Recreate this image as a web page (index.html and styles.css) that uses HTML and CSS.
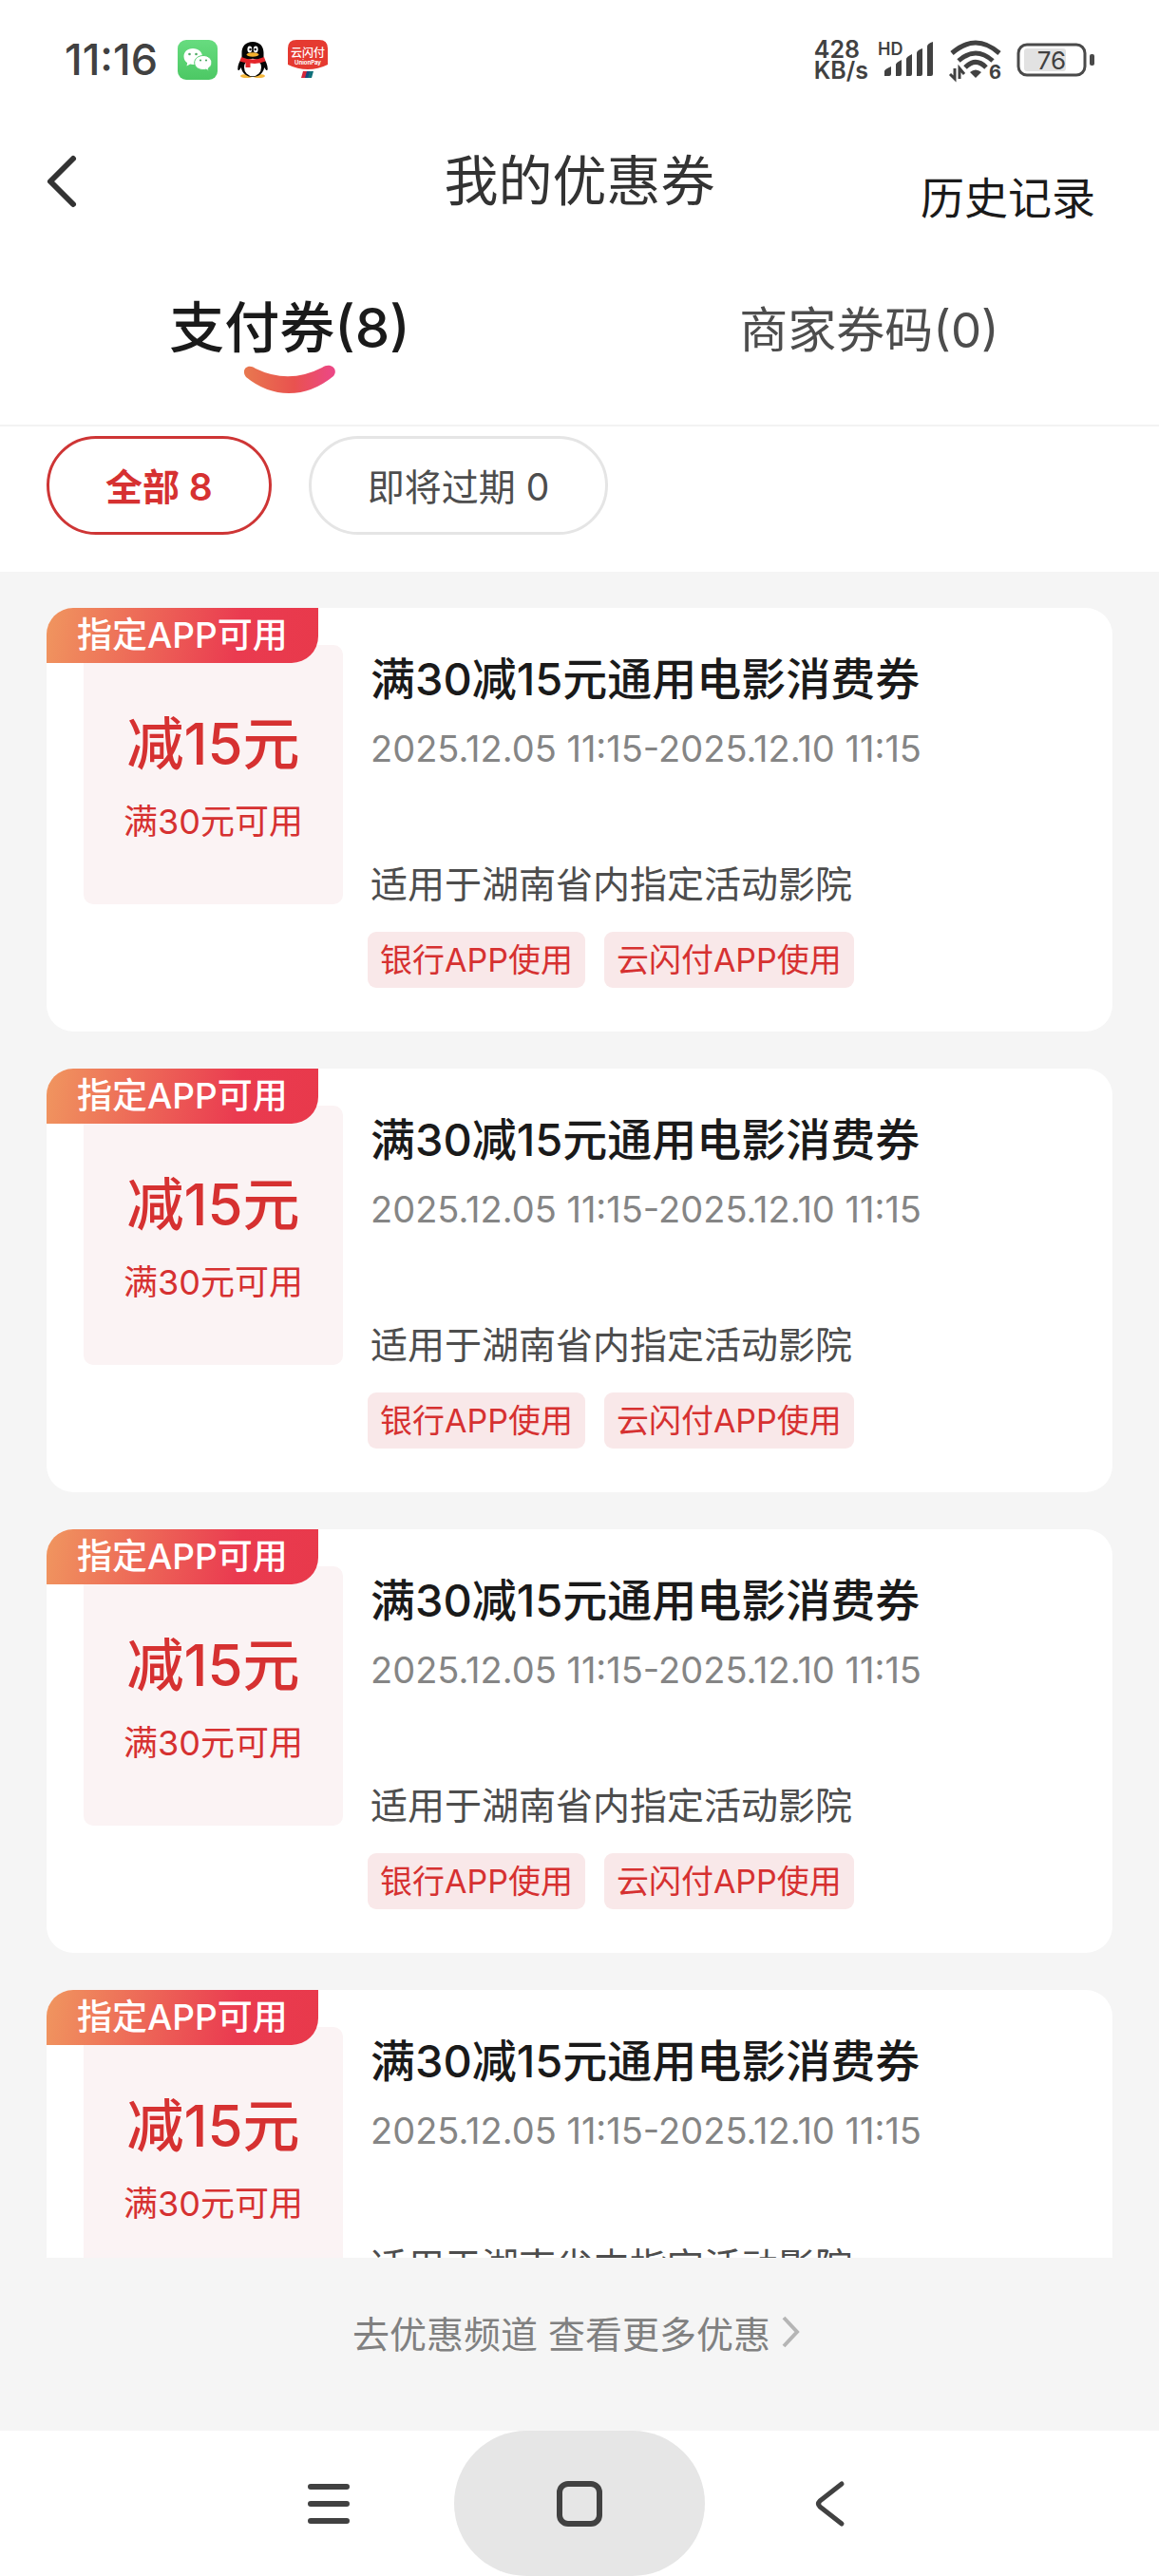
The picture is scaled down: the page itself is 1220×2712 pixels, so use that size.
FILE: index.html
```
<!DOCTYPE html>
<html lang="zh-CN">
<head>
  <meta charset="UTF-8" />
  <meta name="viewport" content="width=device-width, initial-scale=1.0"/>
  <title>我的优惠券</title>
  <link rel="stylesheet" href="styles.css">
</head>
<body>

  <div class="status-bar">
    <div class="status-left">
      <span class="time">11:16</span>
      <svg class="app-icon" width="42" height="42" viewBox="0 0 42 42">
        <defs>
          <linearGradient id="wechatBg" x1="0" y1="0" x2="0" y2="1">
            <stop offset="0" stop-color="#67dc7f"/>
            <stop offset="1" stop-color="#4cc864"/>
          </linearGradient>
        </defs>
        <rect width="42" height="42" rx="9" fill="url(#wechatBg)"/>
        <path d="M16 9C10 9 6.500 13 6.500 17.500c0 3 1.500 5.200 3.700 6.700L9.500 27.500l3.700-1.900c1 .3 2 .4 3.200.4C22 26 26 22 26 17.500S22 9 16 9z" fill="#fff"/>
        <path d="M27 16.500c-5.300 0-9.300 3.300-9.300 7.500s4 7.500 9.300 7.500c1.100 0 2-.1 2.900-.4l3 1.600-.7-2.700c2.200-1.400 3.700-3.500 3.700-6 0-4.200-3.800-7.500-8.900-7.500z" fill="#fff" stroke="#58d071"/>
        <circle cx="12.500" cy="15" r="1.300" fill="#4ea963"/>
        <circle cx="19.500" cy="15" r="1.300" fill="#4ea963"/>
        <circle cx="24" cy="21.500" r="1.100" fill="#4ea963"/>
        <circle cx="30" cy="21.500" r="1.100" fill="#4ea963"/>
      </svg>
      <svg class="app-icon" width="32" height="38" viewBox="0 0 32 38">
        <ellipse cx="9.500" cy="36" rx="6.500" ry="2" fill="#f5b83d"/>
        <ellipse cx="22.500" cy="36" rx="6.500" ry="2" fill="#f5b83d"/>
        <path d="M16 0C8.500 0 4.500 5 4.500 11.500V17C2 21 0 25 .3 29c.3 2 1.800 1.200 3.500-2 1 6 5.700 10 12.200 10s11.200-4 12.200-10c1.700 3.200 3.200 4 3.500 2 .3-4-1.700-8-4.200-12v-5.500C27.500 5 23.500 0 16 0z" fill="#050505"/>
        <ellipse cx="16" cy="27" rx="9" ry="9.300" fill="#fff"/>
        <ellipse cx="12.800" cy="8" rx="2.400" ry="3.400" fill="#fff"/>
        <ellipse cx="19.200" cy="8" rx="2.400" ry="3.400" fill="#fff"/>
        <circle cx="13.500" cy="8" r="1.200"/>
        <circle cx="18.700" cy="8" r="1.200"/>
        <ellipse cx="16" cy="13.500" rx="6.500" ry="2.200" fill="#f5b12e"/>
        <path d="M4 16q12 5 24 0l1.500 4.500Q21 24 13.500 22.500V27H8.500v-5Q5 21.500 2.500 20.500z" fill="#e5262b"/>
      </svg>
      <svg class="app-icon" width="42" height="42" viewBox="0 0 42 42">
        <path d="M9 0h24q9 0 9 9v17q-10 5-21 5T0 26V9q0-9 9-9z" fill="#e53a31"/>
        <text class="logo-cn" x="21" y="18" text-anchor="middle">云闪付</text>
        <text class="logo-en" x="21" y="26" text-anchor="middle">UnionPay</text>
        <path d="M16 33h5l-2 7h-5z" fill="#d8283c"/>
        <path d="M20 33h4l-2 7h-4z" fill="#1b4a80"/>
        <path d="M23 33h4l-2 7h-4z" fill="#10717b"/>
      </svg>
    </div>
    <div class="status-right">
      <div class="net-speed">428<br>KB/s</div>
      <svg class="signal" width="60" height="42" viewBox="0 0 60 42" fill="#414141">
        <text class="hd" x="0" y="16">HD</text>
        <path d="M7 38v-5q0-2 7-5v8q0 2-2 2zM19 38v-12q0-2 6-5v15q0 2-2 2zM30 38v-18q0-2 6-5v21q0 2-2 2zM41 38v-24q0-3 6-5v27q0 2-2 2zM52 38v-31q0-3 6-5v34q0 2-2 2z"/>
      </svg>
      <svg class="wifi" width="54" height="42" viewBox="0 0 54 42" fill="none" stroke="#414141">
        <path d="M2 14Q27-8 52 14" stroke-width="5"/>
        <path d="M9 22Q27 6 45 22" stroke-width="5"/>
        <path d="M16 29Q27 18 38 29" stroke-width="5"/>
        <path d="M21 34q6-5 12 0l-6 6z" fill="#414141" stroke="none"/>
        <path d="M5 30v11l-5-5M10 41V30l5 6" stroke-width="3"/>
        <text class="wifi-six" x="41" y="41">6</text>
      </svg>
      <svg class="battery" width="82" height="36" viewBox="0 0 82 36">
        <rect x="8" y="6" width="44" height="24" rx="3" fill="#e2e2e2"/>
        <rect x="2" y="2" width="70" height="32" rx="9" fill="none" stroke="#4a4a4a" stroke-width="3"/>
        <rect x="77" y="12" width="5" height="12" rx="2" fill="#4a4a4a"/>
        <text class="battery-text" x="37" y="28" text-anchor="middle">76</text>
      </svg>
    </div>
  </div>

  <header class="header">
    <button class="back-btn" aria-label="返回">
      <svg width="32" height="56" viewBox="0 0 32 56" fill="none" stroke="#333" stroke-width="6" stroke-linecap="round" stroke-linejoin="round">
        <path d="M28 4L4 28l24 24"/>
      </svg>
    </button>
    <h1>我的优惠券</h1>
    <a class="history" href="#">历史记录</a>
  </header>

  <nav class="tabs">
    <button class="tab active">
      支付券(8)
      <svg width="98" height="30" viewBox="0 0 98 30">
        <defs>
          <linearGradient id="smile" x1="0" y1="0" x2="1" y2="0">
            <stop offset="0" stop-color="#e8784f"/>
            <stop offset="0.550" stop-color="#e9524f"/>
            <stop offset="1" stop-color="#ec4788"/>
          </linearGradient>
        </defs>
        <path d="M3 13C-3 5 5-2 13 4q35 17 70-1c8-6 18 1 12 9Q73 30 48 30 24 30 3 13z" fill="url(#smile)"/>
      </svg>
    </button>
    <button class="tab">商家券码(0)</button>
  </nav>

  <div class="filters">
    <button class="filter active">全部 8</button>
    <button class="filter">即将过期 0</button>
  </div>

  <main class="coupon-list">
    <article class="coupon">
      <span class="badge">指定APP可用</span>
      <div class="amount">
        <strong>减15元</strong>
        <span>满30元可用</span>
      </div>
      <div class="info">
        <h2>满30减15元通用电影消费券</h2>
        <p class="date">2025.12.05 11:15-2025.12.10 11:15</p>
        <p class="desc">适用于湖南省内指定活动影院</p>
        <div class="tags">
          <span class="tag">银行APP使用</span>
          <span class="tag">云闪付APP使用</span>
        </div>
      </div>
    </article>

    <article class="coupon">
      <span class="badge">指定APP可用</span>
      <div class="amount">
        <strong>减15元</strong>
        <span>满30元可用</span>
      </div>
      <div class="info">
        <h2>满30减15元通用电影消费券</h2>
        <p class="date">2025.12.05 11:15-2025.12.10 11:15</p>
        <p class="desc">适用于湖南省内指定活动影院</p>
        <div class="tags">
          <span class="tag">银行APP使用</span>
          <span class="tag">云闪付APP使用</span>
        </div>
      </div>
    </article>

    <article class="coupon">
      <span class="badge">指定APP可用</span>
      <div class="amount">
        <strong>减15元</strong>
        <span>满30元可用</span>
      </div>
      <div class="info">
        <h2>满30减15元通用电影消费券</h2>
        <p class="date">2025.12.05 11:15-2025.12.10 11:15</p>
        <p class="desc">适用于湖南省内指定活动影院</p>
        <div class="tags">
          <span class="tag">银行APP使用</span>
          <span class="tag">云闪付APP使用</span>
        </div>
      </div>
    </article>

    <article class="coupon">
      <span class="badge">指定APP可用</span>
      <div class="amount">
        <strong>减15元</strong>
        <span>满30元可用</span>
      </div>
      <div class="info">
        <h2>满30减15元通用电影消费券</h2>
        <p class="date">2025.12.05 11:15-2025.12.10 11:15</p>
        <p class="desc">适用于湖南省内指定活动影院</p>
      </div>
    </article>
  </main>

  <a class="more-link" href="#">
    去优惠频道 查看更多优惠
    <svg width="20" height="34" viewBox="0 0 20 34" fill="none" stroke="#b5b5b5" stroke-width="4">
      <path d="M2 2l14 15L2 32"/>
    </svg>
  </a>

  <nav class="system-nav">
    <button aria-label="最近任务">
      <svg width="48" height="48" viewBox="0 0 48 48" stroke="#414141" stroke-width="6" stroke-linecap="round">
        <path d="M5 6h38M5 24h38M5 42h38"/>
      </svg>
    </button>
    <button class="pressed" aria-label="主屏幕">
      <svg width="48" height="48" viewBox="0 0 48 48" fill="none" stroke="#414141" stroke-width="6">
        <rect x="3" y="3" width="42" height="42" rx="9"/>
      </svg>
    </button>
    <button aria-label="返回上一页">
      <svg width="48" height="48" viewBox="0 0 48 48" fill="none" stroke="#414141" stroke-width="5" stroke-linecap="round" stroke-linejoin="round">
        <path d="M36 3L13 21q-3 3 0 6l23 18"/>
      </svg>
    </button>
  </nav>

</body>
</html>
```
FILE: styles.css
```
* {
  box-sizing: border-box;
}

body {
  font-family: Inter, 'Noto Sans CJK SC', sans-serif;
  background-color: #fff;
  color: #1a1a1a;
  margin: 0;
  height: 100vh;
  display: flex;
  flex-direction: column;
}

button {
  font-family: inherit;
  background: none;
  border: none;
  padding: 0;
  cursor: pointer;
}

a {
  color: inherit;
  text-decoration: none;
}

svg {
  display: block;
  overflow: visible;
}

/* status bar */
.status-bar {
  display: flex;
  justify-content: space-between;
  align-items: center;
  height: 126px;
  padding: 0 68px;
}

.status-left,
.status-right {
  display: flex;
  align-items: center;
}

.status-left {
  gap: 21px;
}

.status-right {
  gap: 16px;
}

.time {
  font-size: 45px;
  line-height: 48px;
  font-weight: 500;
  color: #414141;
}

.logo-cn {
  font-size: 12px;
  font-weight: 500;
  fill: #fff;
}

.logo-en {
  font-size: 6px;
  font-weight: 700;
  fill: #fff;
}

.net-speed {
  font-size: 25px;
  line-height: 22px;
  font-weight: 600;
  color: #414141;
}

.signal {
  margin-left: -6px;
}

.hd {
  font-size: 18px;
  font-weight: 600;
}

.wifi-six {
  font-size: 20px;
  font-weight: 700;
  fill: #414141;
  stroke: none;
}

.battery-text {
  font-size: 26px;
  font-weight: 400;
  fill: #414141;
}

/* page header */
.header {
  display: grid;
  grid-template-columns: 1fr auto 1fr;
  align-items: center;
  height: 130px;
  padding: 0 49px;
  color: #333;
}

.back-btn {
  justify-self: start;
}

h1 {
  margin: 0;
  font-size: 57px;
  line-height: 68px;
  font-weight: 400;
}

.history {
  justify-self: end;
  padding: 34px 18px 0 0;
  font-size: 46px;
  line-height: 56px;
  color: #1a1a1a;
}

.tabs {
  display: flex;
  height: 193px;
  border-bottom: 2px solid #f3f3f3;
}

.tab {
  flex: 1;
  display: flex;
  flex-direction: column;
  align-items: center;
  padding-top: 56px;
  gap: 3px;
  font-size: 51px;
  line-height: 72px;
  color: #4d4d4d;
}

.tab.active {
  padding-top: 53px;
  font-size: 58px;
  font-weight: 500;
  color: #1a1a1a;
}

.filters {
  display: flex;
  gap: 39px;
  padding: 10px 49px 39px;
}

.filter {
  height: 104px;
  padding: 0 59px 2px;
  border: 3px solid #e5e5e5;
  border-radius: 52px;
  font-size: 39px;
  color: #4d4d4d;
}

.filter.active {
  border-color: #ce3535;
  color: #d63131;
  font-weight: 600;
}

/* coupons */
.coupon-list {
  flex: 1;
  min-height: 0;
  overflow: hidden;
  display: flex;
  flex-direction: column;
  gap: 39px;
  padding: 38px 49px 0;
  background-color: #f5f5f5;
}

.coupon {
  position: relative;
  flex-shrink: 0;
  display: flex;
  align-items: flex-start;
  gap: 29px;
  padding: 39px 39px 46px;
  border-radius: 28px;
  background-color: #fff;
}

.badge {
  position: absolute;
  top: 0;
  left: 0;
  padding: 0 32px;
  border-radius: 28px 0 28px 0;
  background: linear-gradient(100deg, #f0965f, #ea3b50 70%, #e8394b);
  color: #fff;
  font-size: 37px;
  line-height: 58px;
  font-weight: 500;
}

.amount {
  width: 273px;
  height: 273px;
  display: flex;
  flex-direction: column;
  align-items: center;
  padding-top: 69px;
  border-radius: 10px;
  background-color: #fbf3f4;
  color: #d63131;
}

.amount strong {
  font-size: 60px;
  line-height: 70px;
  font-weight: 500;
}

.amount span {
  margin-top: 22px;
  font-size: 36px;
  line-height: 50px;
}

.info h2 {
  margin: 6px 0 0;
  font-size: 47px;
  line-height: 60px;
  font-weight: 500;
}

.info p {
  margin: 0;
}

.info .date {
  margin-top: 13px;
  font-size: 38px;
  line-height: 60px;
  color: #858585;
}

.info .desc {
  margin-top: 83px;
  font-size: 39px;
  line-height: 60px;
  color: #4d4d4d;
}

.tags {
  display: flex;
  gap: 20px;
  margin-top: 20px;
  margin-left: -3px;
}

.tag {
  padding: 0 13px;
  border-radius: 9px;
  background-color: #f9e8e9;
  color: #d63131;
  font-size: 34px;
  line-height: 59px;
}

.more-link {
  display: flex;
  justify-content: center;
  align-items: center;
  gap: 12px;
  height: 182px;
  padding: 0 6px 26px 0;
  background-color: #f5f5f5;
  color: #808080;
  font-size: 39px;
}

/* system navigation */
.system-nav {
  display: flex;
  justify-content: center;
}

.system-nav button {
  width: 264px;
  height: 153px;
  display: flex;
  justify-content: center;
  align-items: center;
}

.system-nav .pressed {
  border-radius: 77px;
  background-color: #e6e6e6;
}
```
